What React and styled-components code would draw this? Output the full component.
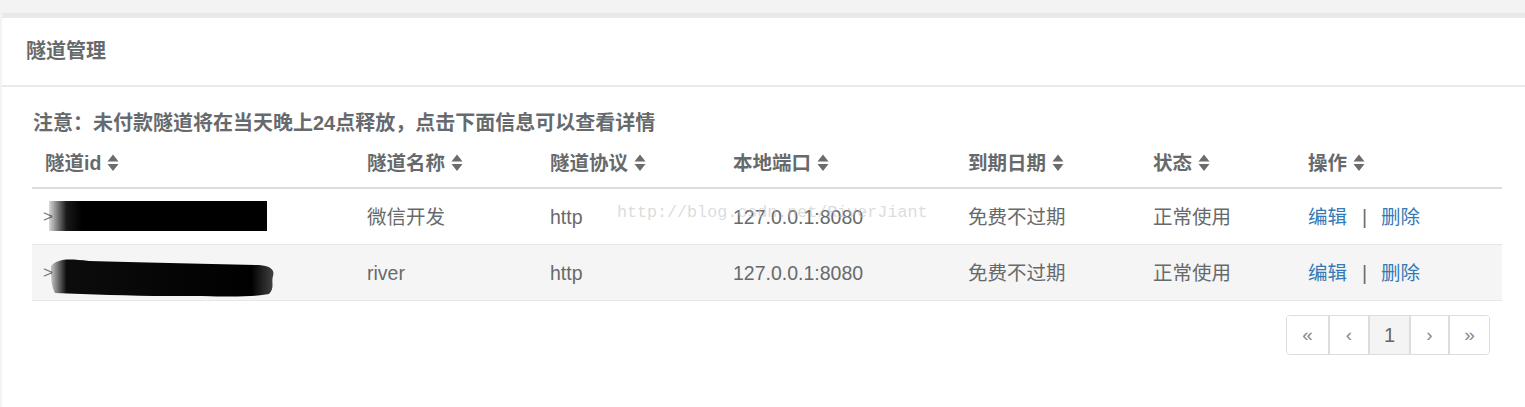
import React from "react";
import styled, { createGlobalStyle } from "styled-components";

const Global = createGlobalStyle`
  html, body { margin: 0; padding: 0; background: #f3f3f3; }
  body { font-family: "Liberation Sans", "Noto Sans CJK SC", sans-serif; color: #676a6c; }
`;

const Page = styled.div`
  padding: 13px 0 0 2px;
  height: 407px;
  box-sizing: border-box;
  overflow: hidden;
`;

const Ibox = styled.div`
  background: #fff;
  border-top: 5px solid #e7eaec;
  height: 394px;
  box-sizing: border-box;
`;

const IboxTitle = styled.div`
  height: 67px;
  border-bottom: 2px solid #e7eaec;
  display: flex;
  align-items: center;
  padding: 0 0 0 24px;
  box-sizing: content-box;
`;

const Title = styled.h5`
  margin: 0;
  font-size: 20px;
  font-weight: 700;
  color: #676a6c;
  line-height: 28px;
  padding-bottom: 2px;
`;

const IboxContent = styled.div`
  padding: 22px 23px 0 30px;
  position: relative;
`;

const Notice = styled.div`
  font-size: 20px;
  font-weight: 700;
  line-height: 28px;
  padding-left: 1px;
  margin-bottom: 8px;
  color: #676a6c;
`;

const TableWrap = styled.div`
  position: relative;
`;

const Table = styled.table`
  width: 100%;
  border-collapse: collapse;
  table-layout: fixed;
  font-size: 19.5px;
`;

const Th = styled.th`
  text-align: left;
  font-weight: 700;
  line-height: 28px;
  padding: 4px 8px 10px 13px;
  border-bottom: 2px solid #dddddd;
  white-space: nowrap;
  color: #676a6c;
`;

const Row = styled.tr`
  background: ${(p) => (p.$striped ? "#f5f5f5" : "#ffffff")};
`;

const Td = styled.td`
  line-height: 28px;
  padding: 14px 8px 13px 13px;
  border-bottom: 1px solid #e7e7e7;
  white-space: nowrap;
  color: #676a6c;
  position: relative;
`;

const SortIcon = styled.svg`
  width: 12px;
  height: 18px;
  margin-left: 6px;
  vertical-align: -2px;
`;

const Link = styled.a`
  color: #337ab7;
  text-decoration: none;
  cursor: pointer;
`;

const Sep = styled.span`
  color: #676a6c;
  margin: 0 14px 0 15px;
`;

const IdCell = styled.div`
  display: flex;
  align-items: center;
  height: 28px;
  position: relative;
`;

const Chevron = styled.span`
  color: #7a7a7a;
  font-size: 17px;
  margin-left: -2px;
`;

const Redact = styled.svg`
  position: absolute;
  left: ${(p) => p.$left}px;
  top: ${(p) => p.$top}px;
`;

const Watermark = styled.div`
  position: absolute;
  left: 585px;
  top: 58px;
  font-family: "Liberation Mono", "DejaVu Sans Mono", monospace;
  font-size: 16.7px;
  line-height: 20px;
  color: rgba(190, 190, 190, 0.55);
  pointer-events: none;
  white-space: nowrap;
`;

const PagerRow = styled.div`
  display: flex;
  justify-content: flex-end;
  padding-right: 12px;
  margin-top: 14px;
`;

const Pager = styled.ul`
  display: flex;
  list-style: none;
  margin: 0;
  padding: 0;
  border: 1px solid #dddddd;
  border-radius: 4px;
  overflow: hidden;
  height: 38px;
`;

const PageBtn = styled.li`
  width: ${(p) => p.$w}px;
  display: flex;
  align-items: center;
  justify-content: center;
  font-size: ${(p) => (p.$num ? 20 : 19)}px;
  color: ${(p) => (p.$num ? "#666" : "#888")};
  background: ${(p) => (p.$active ? "#f4f4f4" : "#fff")};
  border-left: ${(p) => (p.$first ? "none" : "2px solid #dddddd")};
  box-sizing: border-box;
`;

const Sort = () => (
  <SortIcon viewBox="0 0 12 18">
    <path d="M6 0.5 L11.5 7.5 L0.5 7.5 Z" fill="#6c6c6c" />
    <path d="M0.5 10 L11.5 10 L6 17 Z" fill="#6c6c6c" />
  </SortIcon>
);

const columns = [
  { label: "隧道id", w: 322 },
  { label: "隧道名称", w: 183 },
  { label: "隧道协议", w: 183 },
  { label: "本地端口", w: 235 },
  { label: "到期日期", w: 185 },
  { label: "状态", w: 155 },
  { label: "操作", w: 207 },
];

const rows = [
  { name: "微信开发", proto: "http", port: "127.0.0.1:8080", exp: "免费不过期", state: "正常使用" },
  { name: "river", proto: "http", port: "127.0.0.1:8080", exp: "免费不过期", state: "正常使用" },
];

const Redaction1 = () => (
  <Redact $left={4} $top={-2} width="220" height="30" viewBox="0 0 220 30">
    <defs>
      <linearGradient id="fade1" x1="0" x2="1" y1="0" y2="0">
        <stop offset="0" stopColor="#000" stopOpacity="0.15" />
        <stop offset="0.08" stopColor="#000" stopOpacity="0.9" />
        <stop offset="0.15" stopColor="#000" stopOpacity="1" />
      </linearGradient>
    </defs>
    <rect x="0" y="0" width="218" height="30" fill="url(#fade1)" />
  </Redact>
);

const Redaction2 = () => (
  <Redact $left={4} $top={-3} width="230" height="44" viewBox="0 0 230 44">
    <defs>
      <linearGradient id="fade2" x1="0" x2="1" y1="0" y2="0">
        <stop offset="0" stopColor="#000" stopOpacity="0.2" />
        <stop offset="0.07" stopColor="#000" stopOpacity="0.95" />
        <stop offset="0.9" stopColor="#000" stopOpacity="1" />
        <stop offset="1" stopColor="#222" stopOpacity="0.85" />
      </linearGradient>
    </defs>
    <path
      d="M2 10 C10 2, 20 3, 40 5 C90 6, 150 8, 210 9 C222 10, 226 14, 224 20 C222 26, 226 32, 220 38 C200 42, 170 40, 120 40 C80 40, 40 38, 6 37 C2 30, 2 20, 2 10 Z"
      fill="url(#fade2)"
    />
  </Redact>
);

export default function App() {
  return (
    <>
      <Global />
      <Page>
        <Ibox>
          <IboxTitle>
            <Title>隧道管理</Title>
          </IboxTitle>
          <IboxContent>
            <Notice>注意：未付款隧道将在当天晚上24点释放，点击下面信息可以查看详情</Notice>
            <TableWrap>
              <Table>
                <colgroup>
                  {columns.map((c) => (
                    <col key={c.label} style={{ width: c.w }} />
                  ))}
                </colgroup>
                <thead>
                  <tr>
                    {columns.map((c) => (
                      <Th key={c.label}>
                        {c.label}
                        <Sort />
                      </Th>
                    ))}
                  </tr>
                </thead>
                <tbody>
                  {rows.map((r, i) => (
                    <Row key={i} $striped={i === 1}>
                      <Td>
                        <IdCell>
                          <Chevron>&gt;</Chevron>
                          {i === 0 ? <Redaction1 /> : <Redaction2 />}
                        </IdCell>
                      </Td>
                      <Td>{r.name}</Td>
                      <Td>{r.proto}</Td>
                      <Td>{r.port}</Td>
                      <Td>{r.exp}</Td>
                      <Td>{r.state}</Td>
                      <Td>
                        <Link>编辑</Link>
                        <Sep>|</Sep>
                        <Link>删除</Link>
                      </Td>
                    </Row>
                  ))}
                </tbody>
              </Table>
              <Watermark>http://blog.csdn.net/RiverJiant</Watermark>
            </TableWrap>
            <PagerRow>
              <Pager>
                <PageBtn $w={41} $first>«</PageBtn>
                <PageBtn $w={40}>‹</PageBtn>
                <PageBtn $w={41} $active $num>1</PageBtn>
                <PageBtn $w={39}>›</PageBtn>
                <PageBtn $w={41}>»</PageBtn>
              </Pager>
            </PagerRow>
          </IboxContent>
        </Ibox>
      </Page>
    </>
  );
}
